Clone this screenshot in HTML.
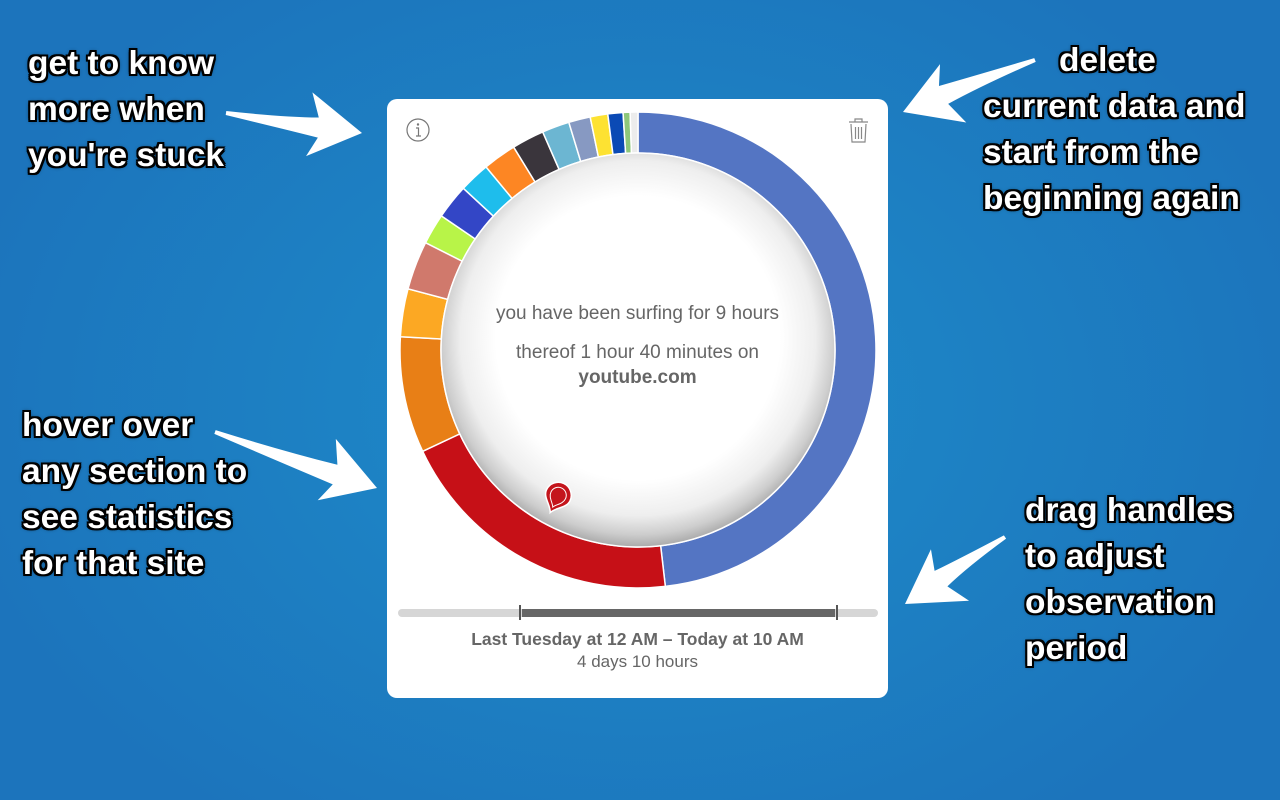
<!DOCTYPE html>
<html><head><meta charset="utf-8"><style>
html,body{margin:0;padding:0}
body{width:1280px;height:800px;overflow:hidden;position:relative;font-family:"Liberation Sans",Arial,sans-serif;
background:radial-gradient(ellipse 700px 520px at 640px 400px,#1e8ccb 0%,#1d7fc2 55%,#1c74bc 100%);}
.lbl{position:absolute;color:#fff;font-weight:bold;font-size:33.5px;line-height:46px;letter-spacing:0;
text-shadow:-2px -2px 0 #000,2px -2px 0 #000,-2px 2px 0 #000,2px 2px 0 #000,0 2px 0 #000,0 -2px 0 #000,2px 0 0 #000,-2px 0 0 #000,0 0 5px #000;}
.card{position:absolute;left:387px;top:99px;width:501px;height:599px;background:#fff;border-radius:10px;}
.t{position:absolute;left:0;width:100%;text-align:center;color:#666;}
</style></head><body>
<div class="lbl" style="left:28px;top:41px">get to know<br>more when<br>you're stuck</div>
<div class="lbl" style="left:983px;top:38px"><span style="margin-left:76px">delete</span><br>current data and<br>start from the<br>beginning again</div>
<div class="lbl" style="left:22px;top:403px">hover over<br>any section to<br>see statistics<br>for that site</div>
<div class="lbl" style="left:1025px;top:488px">drag handles<br>to adjust<br>observation<br>period</div>

<svg width="1280" height="800" style="position:absolute;left:0;top:0" id="arrows"></svg>

<div class="card">
<svg width="501" height="599" style="position:absolute;left:0;top:0" id="donut">
<defs>
<radialGradient id="ig" cx="50%" cy="47%" r="53%">
<stop offset="0.68" stop-color="#fff"/><stop offset="0.85" stop-color="#eeeeee"/><stop offset="0.94" stop-color="#cdcdcd"/><stop offset="1" stop-color="#aaaaaa"/>
</radialGradient>
</defs>
<g id="segs"></g>
<circle cx="251" cy="251" r="197" fill="url(#ig)" stroke="#fff" stroke-width="1.5"/>
<circle cx="31" cy="31" r="11" fill="none" stroke="#777" stroke-width="1.2"/>
<circle cx="31" cy="25.5" r="1.2" fill="#777"/>
<path d="M29 29 H31.5 V37 M29 37 H34" stroke="#777" stroke-width="1.2" fill="none"/>
<g stroke="#888" stroke-width="1.2" fill="none">
<path d="M462 23 H481 M468 23 V20 H475 V23"/>
<path d="M464 25 L465 43 H478 L479 25"/>
<path d="M468.5 28 V40 M471.5 28 V40 M474.5 28 V40"/>
</g>
<g transform="translate(170,399) rotate(25)">
<path d="M0 16 C-3 9 -13 5 -13 -3 A13 13 0 1 1 13 -3 C13 5 3 9 0 16 Z" fill="#c4151c" stroke="#fff" stroke-width="1.5"/>
<path d="M0 10 C-2 6 -8 3 -8 -3 A8 8 0 1 1 8 -3 C8 3 2 6 0 10 Z" fill="none" stroke="#fff" stroke-width="1"/>
</g>
<rect x="11" y="510" width="480" height="8" rx="4" fill="#d6d6d6"/>
<rect x="135" y="510" width="313" height="8" fill="#666"/>
<rect x="132" y="506" width="2" height="15" fill="#555"/>
<rect x="449" y="506" width="2" height="15" fill="#555"/>
</svg>
<div class="t" style="top:204px;font-size:19px">you have been surfing for 9 hours</div>
<div class="t" style="top:243px;font-size:19px">thereof 1 hour 40 minutes on</div>
<div class="t" style="top:268px;font-size:19px;font-weight:bold">youtube.com</div>
<div class="t" style="top:530px;font-size:17.5px;font-weight:bold">Last Tuesday at 12 AM – Today at 10 AM</div>
<div class="t" style="top:553px;font-size:17px">4 days 10 hours</div>
</div>

<script>
(function(){
var segs=[[0,173.4,"#5475c3"],[173.4,244.8,"#c61017"],[244.8,273.2,"#e87f16"],[273.2,284.9,"#fca823"],[284.9,296.8,"#d0796c"],[296.8,304.3,"#b8f448"],[304.3,312.8,"#3346c6"],[312.8,320.3,"#1ebdec"],[320.3,328.5,"#fd8623"],[328.5,336.4,"#3a353c"],[336.4,343.1,"#6cb6d2"],[343.1,348.4,"#8799c2"],[348.4,352.7,"#fde232"],[352.7,356.4,"#0b4ab5"],[356.4,358.1,"#8ec77a"],[358.1,360,"#ececec"]];
var cx=251,cy=251,R=238,r=197,ns="http://www.w3.org/2000/svg",g=document.getElementById("segs");
function p(a,rad){a=(a-90)*Math.PI/180;return [cx+rad*Math.cos(a),cy+rad*Math.sin(a)];}
segs.forEach(function(s){
var a0=s[0],a1=s[1],lg=(a1-a0)>180?1:0,o0=p(a0,R),o1=p(a1,R),i1=p(a1,r),i0=p(a0,r);
var d="M"+o0+"A"+R+" "+R+" 0 "+lg+" 1 "+o1+"L"+i1+"A"+r+" "+r+" 0 "+lg+" 0 "+i0+"Z";
var e=document.createElementNS(ns,"path");e.setAttribute("d",d);e.setAttribute("fill",s[2]);e.setAttribute("stroke","#fff");e.setAttribute("stroke-width","1.5");g.appendChild(e);});
var A=[[226,113,362,133],[1035,60,903,112],[215,432,377,488],[1005,537,905,604]];
var sv=document.getElementById("arrows");
A.forEach(function(a){
var dx=a[2]-a[0],dy=a[3]-a[1],L=Math.sqrt(dx*dx+dy*dy),ang=Math.atan2(dy,dx)*180/Math.PI;
var d="M0 0 L-55 -33 L-45 -9 Q-"+(L*0.6)+" -4 -"+L+" -2 L-"+L+" 2 Q-"+(L*0.6)+" 7 -43 11 L-52 31 Z";
var e=document.createElementNS(ns,"path");e.setAttribute("d",d);e.setAttribute("fill","#fff");
e.setAttribute("transform","translate("+a[2]+","+a[3]+") rotate("+ang+")");sv.appendChild(e);});
})();
</script>
</body></html>
